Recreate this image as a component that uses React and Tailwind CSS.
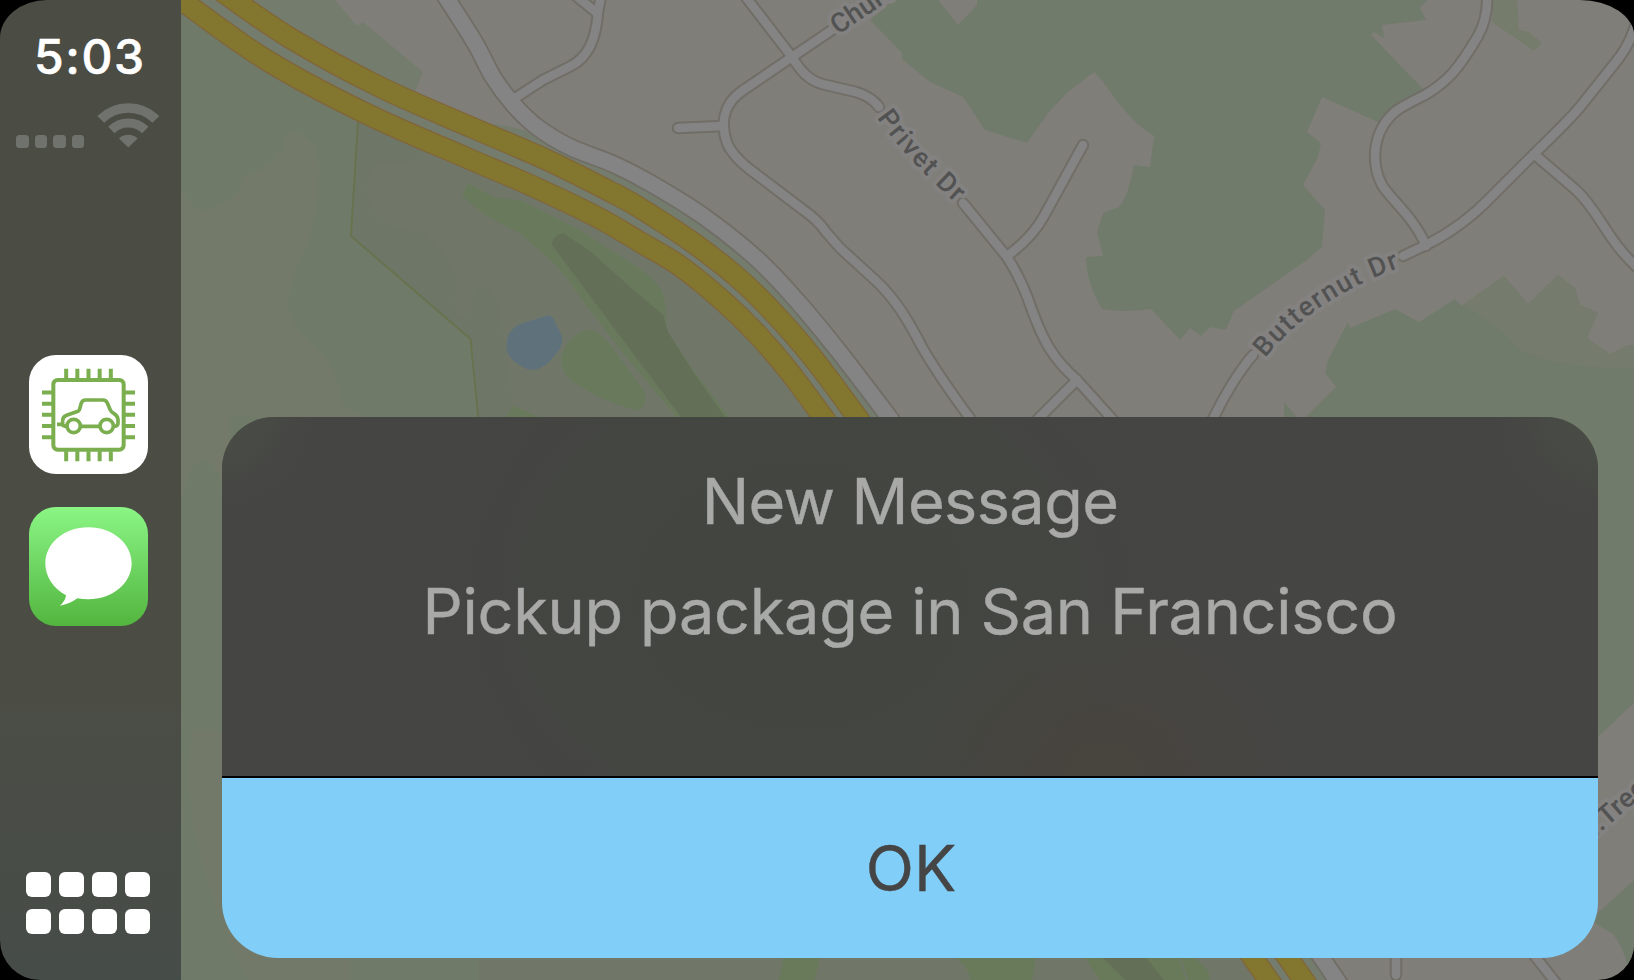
import React from "react";

// Catmull-Rom spline through the given points, as cubic segments.
function smooth(points) {
  let d = `M${points[0][0]} ${points[0][1]}`;
  for (let i = 0; i < points.length - 1; i++) {
    const a = points[Math.max(i - 1, 0)];
    const b = points[i];
    const c = points[i + 1];
    const e = points[Math.min(i + 2, points.length - 1)];
    d += ` C${b[0] + (c[0] - a[0]) / 6} ${b[1] + (c[1] - a[1]) / 6} ${c[0] - (e[0] - b[0]) / 6} ${c[1] - (e[1] - b[1]) / 6} ${c[0]} ${c[1]}`;
  }
  return d;
}

const streets = [
  "M601 -4 L598 12 C596 40 588 57 571 66 L543 80 L512 100",
  "M576 -4 L597 13",
  "M745 -4 L792 57 C800 70 808 80 822 84 L856 92 Q872 97 879 107",
  "M963 203 L1007 257 Q1022 280 1032 310 C1043 340 1052 358 1077 380 L1114 421",
  "M832 30 L792 57 L742 91 C722 105 721 125 727 143 Q732 155 748 168 L802 209 Q818 220 826 232 L840 248 L874 279 C895 298 908 320 922 347 Q938 375 972 421",
  "M678 128 L723 126",
  "M1083 145 L1044 216 Q1032 238 1007 256",
  "M1077 380 L1036 421",
  "M1487 -4 Q1488 18 1478 36 C1458 70 1447 82 1425 95 C1401 107 1392 111 1383 126 C1372 145 1373 168 1382 185 C1391 200 1414 217 1426 246",
  "M1640 8 Q1634 38 1619 58 L1580 107 Q1572 117 1534 154 L1491 197 C1471 218 1452 232 1426 245 L1403 256",
  "M1253 355 Q1233 378 1212 421",
  "M1534 154 L1576 190 C1600 212 1606 240 1640 270",
  "M1396 950 L1396 975",
  "M1530 950 L1560 988",
];
const arterial = [
  smooth([[444, -6], [475, 43], [493, 77], [513, 104], [537, 127], [570, 147], [613, 164], [650, 183], [703, 216], [757, 259], [798, 302], [840, 353], [892, 421]]),
  "M1315 948 L1345 992",
];
const highway = [
  smooth([[224, -7], [290, 38], [380, 87], [473, 128], [547, 160], [613, 193], [640, 208], [692, 242], [737, 277], [773, 312], [813, 358], [860, 421]]),
  smooth([[172, -7], [188, 5], [268, 61], [367, 114], [467, 158], [530, 185], [597, 217], [640, 242], [680, 266], [723, 301], [757, 334], [788, 370], [826, 421]]),
  "M1246 948 L1277 992",
  "M1281 948 L1312 992",
];

function RoadMap() {
  return (
    <svg
      className="absolute inset-y-0 right-0"
      width="1453"
      height="980"
      viewBox="181 0 1453 980"
      fontFamily="Roboto, sans-serif"
      fontWeight="500"
      fontSize="27"
    >
      <rect x="181" width="1453" height="980" fill="#807e79" />
      <path
        d="M181 0 H335 L357 26 L363 22 L423 72 L415 92 L473 120 L517 128 L570 147 L613 163 L670 193 L707 217 L757 259 L798 302 L840 353 L888 417 L1320 958 L1340 980 H181Z"
        fill="#747d6d"
      />
      <path
        d="M181 10 C250 60 360 115 467 160 L530 188 L597 217 L680 266 L757 334 L823 417 L1265 980 H181Z"
        fill="#707768"
      />
      <path
        d="M181 5 C240 50 300 85 360 115 L355 220 L470 340 L478 417 V980 H181Z"
        fill="#707a68"
      />
      <path
        d="M181 190 L197 210 Q222 210 240 190 L243 177 Q285 165 287 130 Q320 135 319 170 Q318 230 297 268 C285 300 283 313 305 337 Q340 365 340 400 Q355 417 370 417 L370 417 H181Z"
        fill="#737a6a"
      />
      <path
        d="M359 122 L425 152 Q420 165 380 162 Q360 175 370 205 Q385 230 425 233 Q455 265 457 280 Q450 310 460 318 Q474 315 475 287 Q495 280 500 320 Q510 360 512 417 H478 L471 339 L351 236Z"
        fill="#6e7767"
      />
      <path d="M181 417 H230 V500 Q200 420 181 500Z" fill="#737a6a" />
      <path d="M193 730 Q181 790 205 870 T250 980 H350 V730Z" fill="#737968" />

      <path d="M358 122 L351 236 L470.500 339 L478.500 420" fill="none" stroke="#69724f" strokeWidth="2" />
      <path
        d="M468 183 L493 197 L522 201 L580 230 L637 267 Q664 285 665 303 L667 330 L693 370 L732 421 H680 L623 353 L577 293 Q563 270 543 253 L520 233 Q480 215 462 195Z"
        fill="#697a5c"
      />
      <path
        d="M563 233 Q551 237 552 245 L623 340 L684 421 H728 L693 372 L668 332 L663 315 L630 287 L590 251Z"
        fill="#646f57"
      />
      <path d="M587 330 Q600 330 614 350 L645 393 Q647 409 634 410 Q600 400 575 383 Q562 375 561 358 Q568 335 587 330Z" fill="#697a5c" />
      <path d="M513 406 L540 417 H506Z" fill="#697a5c" />
      <path
        d="M507 340 Q510 327 523 323 L543 317 Q551 313 554 320 L562 336 Q564 346 555 355 Q545 369 532 370 Q522 369 511 358 Q505 352 507 340Z"
        fill="#5f727c"
      />
      <path d="M785 950 H821 L815 980 H779Z" fill="#687a5a" />
      <path d="M945 950 H1035 Q1036 968 1032 980 H970 Q970 965 945 950Z" fill="#687a5a" />
      <path d="M1080 950 H1176 L1186 980 H1100Z" fill="#687a5a" />
      <path d="M1095 950 H1140 L1164 980 H1125Z" fill="#646f57" />
      <path d="M1178 950 L1195 959 Q1212 970 1209 980 H1188Z" fill="#687a5a" />

      <path
        d="M893 0 L870 20 L902 53 L902 59 L930 82 L963 97 L985 130 L1027 143 L1048 113 L1068 92 L1094 72 L1100 78 L1120 105 L1136 123 L1154 136 L1150 167 L1134 165 Q1128 197 1119 207 L1103 213 L1097 232 L1103 256 L1086 257 Q1086 282 1102 309 Q1127 313 1151 309 L1180 340 L1190 328 L1201 336 L1210 327 L1226 330 L1234 311 L1307 260 L1322 247 L1325 210 L1303 185 L1318 157 L1321 143 L1307 132 L1322 97 L1378 122 L1396 110 L1427 93 L1371 35 L1374 32 L1384 38 L1382 25 L1426 20 L1420 8 L1427 0 H977 V5 L958 25 L938 0Z"
        fill="#717b6b"
      />
      <path d="M1493 0 H1517 L1519 30 L1529 32 L1542 43 L1534 51 L1492 22Z" fill="#757c6c" />
      <path
        d="M1306 417 L1336 387 L1325 373 L1328 360 L1348 322 L1350 328 L1395 309 L1419 322 L1455 299 L1461 306 L1504 276 L1528 304 L1558 275 L1575 288 L1580 305 L1598 313 L1587 338 L1610 354 L1628 345 H1634 V703 L1598 737 H1306Z"
        fill="#717b6b"
      />
      <path
        d="M1461 306 L1504 276 L1528 304 L1558 275 L1575 288 L1580 305 L1598 313 L1587 338 L1610 354 L1628 345 H1634 V369 Q1549 367 1517 348 Q1499 322 1461 306Z"
        fill="#757c6d"
      />
      <path d="M1284 417 V402 L1297 417Z" fill="#717b6b" />
      <path d="M1634 880 L1590 920 L1613 934 Q1622 945 1628 967 L1634 960Z" fill="#717b6b" />

      <g fill="none" strokeLinecap="round" strokeLinejoin="round">
        {arterial.map((d) => <path key={d} d={d} stroke="#706d65" strokeWidth="19" />)}
        {streets.map((d) => <path key={d} d={d} stroke="#716e67" strokeWidth="12.500" />)}
        {streets.map((d) => <path key={d} d={d} stroke="#858484" strokeWidth="8.500" />)}
        {arterial.map((d) => <path key={d} d={d} stroke="#858484" strokeWidth="15.500" />)}
        {highway.map((d) => <path key={d} d={d} stroke="#80653b" strokeWidth="22" />)}
        {highway.map((d) => <path key={d} d={d} stroke="#83762f" strokeWidth="19.500" />)}
      </g>

      <defs>
        <path id="privet" d="M877 118 Q911 166 974 219" />
        <path id="butternut" d="M1265 358 Q1318 293 1414 263" />
      </defs>
      <g fill="#525252" stroke="#838281" strokeWidth="8" strokeLinejoin="round" paintOrder="stroke">
        <text transform="translate(838 35) rotate(-34)" letterSpacing="0.3">Church</text>
        <text><textPath href="#privet" textLength="116">Privet Dr</textPath></text>
        <text><textPath href="#butternut" textLength="164">Butternut Dr</textPath></text>
        <text transform="translate(1595 837) rotate(-41)" letterSpacing="0.3">r.Tree</text>
      </g>
    </svg>
  );
}

function WifiIcon() {
  return (
    <svg width="62" height="46" viewBox="97 102 62 46" fill="none" stroke="#70736d">
      <path d="M100.700 119.400 A39 39 0 0 1 155.900 119.400" strokeWidth="9.500" />
      <path d="M111.300 130 A24 24 0 0 1 145.300 130" strokeWidth="9" />
      <path d="M128.300 147.500 L119 138.500 A13.500 13.500 0 0 1 137.600 138.500Z" fill="#70736d" stroke="none" />
    </svg>
  );
}

function ChipCarIcon() {
  const pins = [0, 33.5, 67, 100.5, 134];
  return (
    <svg className="size-[119px]" viewBox="87 45 357 357" fill="none" stroke="#7aae4e" strokeWidth="12">
      <rect x="160" y="120" width="211" height="209" rx="13" />
      {pins.map((p) => (
        <g key={p}>
          <path d={`M${198.500 + p} 86 V116`} />
          <path d={`M${198.500 + p} 334 V364`} />
          <path d={`M126 ${157.500 + p} H156`} />
          <path d={`M375 ${157.500 + p} H405`} />
        </g>
      ))}
      <g strokeWidth="11" strokeLinejoin="round">
        <path d="M171 253 H184 Q189 252 188 245 Q187 231 200 226 L234 214 Q238 212 239 207 L244 189 Q247 180 257 180 H309 Q318 180 322 189 L331 210 Q334 216 341 220 Q353 227 354 238 V250 Q354 259 343 259" />
        <path d="M184 251 Q188 259 201 259 M242 259 H298" />
        <circle cx="221" cy="258" r="20" />
        <circle cx="320" cy="258" r="20" />
      </g>
    </svg>
  );
}

function MessagesIcon() {
  return (
    <svg className="size-[119px]" viewBox="87 502 357 357">
      <path
        d="M265 563 C337 563 395 611 395 671 C395 731 337 779 265 779 Q248 779 232 776 Q208 794 180 798 Q197 783 198 767 C160 747 136 711 136 671 C136 611 193 563 265 563Z"
        fill="#fff"
      />
    </svg>
  );
}

function Sidebar() {
  return (
    <aside className="relative flex w-[181px] shrink-0 flex-col bg-linear-to-b from-[#4b4d45] from-70% to-[#464c48] pt-[28px]">
      <div className="pl-[34px] text-[48px] leading-[58px] font-medium tracking-[1.6px] text-white [-webkit-text-stroke:0.6px_white]">5:03</div>
      <div className="mt-[16px] flex items-end pl-[16px]">
        <div className="flex gap-[6px]">
          {[0, 1, 2, 3].map((i) => (
            <span key={i} className="size-[12.600px] rounded-[3.500px] bg-[#70736d]" />
          ))}
        </div>
        <div className="ml-[13px]">
          <WifiIcon />
        </div>
      </div>
      <nav className="mt-[207px] flex flex-col gap-[33px] pl-[29px]">
        <div className="size-[119px] overflow-hidden rounded-[27px] bg-white">
          <ChipCarIcon />
        </div>
        <div className="size-[119px] overflow-hidden rounded-[27px] bg-linear-to-b from-[#8bf685] to-[#52b53e]">
          <MessagesIcon />
        </div>
      </nav>
      <div className="mt-auto mb-[46px] ml-[26px] grid w-[123.500px] grid-cols-4 gap-x-[8px] gap-y-[12px]">
        {[0, 1, 2, 3, 4, 5, 6, 7].map((i) => (
          <span key={i} className="h-[25px] w-[25px] rounded-[6px] bg-white" />
        ))}
      </div>
    </aside>
  );
}

function MessageAlert() {
  return (
    <section className="relative flex h-[541px] w-[1376px] flex-col overflow-hidden rounded-t-[52px] rounded-b-[56px] text-center text-[63px] leading-[76px]">
      <div className="flex h-[359px] flex-col gap-[34px] bg-[#454543] bg-[radial-gradient(circle_at_0%_0%,#4a4e46_0px,transparent_90px),radial-gradient(circle_at_100%_0%,#4a4e46_0px,transparent_100px),radial-gradient(ellipse_200px_170px_at_64%_100%,#48443e_0px,transparent_100%),radial-gradient(ellipse_420px_340px_at_42%_50%,#434640_30%,transparent_100%)] pt-[46px] text-[#a9aaa7] [-webkit-text-stroke:0.4px_#a9aaa7]">
        <h1 className="tracking-[-0.6px]">New Message</h1>
        <p className="tracking-[-0.3px]">Pickup package in San Francisco</p>
      </div>
      <div className="h-[2px] bg-black" />
      <button className="flex flex-1 items-center justify-center bg-[#81cff9] pb-[1px] pl-[2px] text-[#454545] [-webkit-text-stroke:0.4px_#454545]">OK</button>
    </section>
  );
}

export default function App() {
  return (
    <div className="h-[980px] w-[1634px] overflow-hidden bg-black font-[Inter,sans-serif]">
      <div className="relative flex h-full overflow-hidden [border-radius:47px_54px_36px_40px/38px_36px_36px_40px]">
        <RoadMap />
        <Sidebar />
        <main className="pt-[417px] pl-[41px]">
          <MessageAlert />
        </main>
      </div>
    </div>
  );
}
